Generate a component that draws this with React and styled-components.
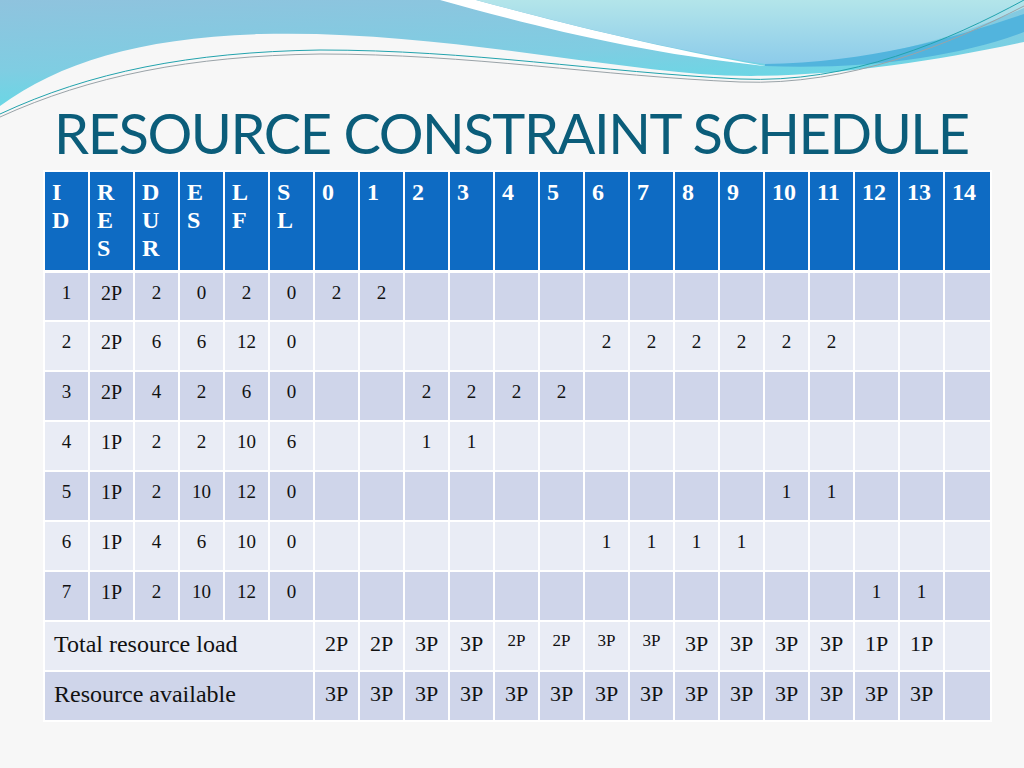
import React from "react";
import styled, { createGlobalStyle } from "styled-components";

const Global = createGlobalStyle`
  html, body { margin: 0; padding: 0; background: #f7f7f7; }
  * { box-sizing: border-box; }
`;

const Slide = styled.div`
  position: relative;
  width: 1024px;
  height: 768px;
  overflow: hidden;
  background: #f7f7f7;
  padding: 98px 0 0 43px;
`;

const Wave = styled.svg`
  position: absolute;
  left: 0;
  top: 0;
  z-index: 0;
`;

const Title = styled.h1`
  position: relative;
  z-index: 1;
  margin: 0 0 2px 11px;
  font-family: "Lato", "Open Sans", sans-serif;
  font-weight: 400;
  font-size: 56px;
  line-height: 70px;
  color: #0b5d7a;
  letter-spacing: -1.45px;
  white-space: nowrap;
`;

const Table = styled.table`
  position: relative;
  z-index: 1;
  border-collapse: collapse;
  table-layout: fixed;
  width: 947px;
  font-family: "Liberation Serif", "DejaVu Serif", serif;
  color: #111;
`;

const HeadCell = styled.th`
  height: 100px;
  padding: 6px 0 0 7px;
  vertical-align: top;
  text-align: left;
  background: #0e6bc3;
  color: #fff;
  font-weight: 700;
  font-size: 24px;
  line-height: 28px;
  border: 2px solid #fff;
  border-bottom-width: 3px;
`;

const Row = styled.tr`
  background: ${(p) => (p.$dark ? "#cfd5ea" : "#e9ecf5")};
`;

const Cell = styled.td`
  height: 50px;
  padding: ${(p) => (p.$raised ? "7px 0 0" : p.$big ? "10px 0 0" : "8px 0 0")};
  vertical-align: top;
  text-align: center;
  font-size: ${(p) => (p.$big ? "22px" : p.$unit ? "20px" : p.$raised ? "17px" : "19px")};
  line-height: 24px;
  border: 2px solid #fff;
  white-space: nowrap;
`;

const LabelCell = styled.td`
  height: 50px;
  padding: 9px 0 0 9px;
  vertical-align: top;
  text-align: left;
  font-size: 24px;
  line-height: 26px;
  border: 2px solid #fff;
  white-space: nowrap;
`;

const headLabels = ["I\nD", "R\nE\nS", "D\nU\nR", "E\nS", "L\nF", "S\nL"];
const days = Array.from({ length: 15 }, (_, i) => String(i));

const rows = [
  { base: ["1", "2P", "2", "0", "2", "0"], fill: { 0: "2", 1: "2" } },
  { base: ["2", "2P", "6", "6", "12", "0"], fill: { 6: "2", 7: "2", 8: "2", 9: "2", 10: "2", 11: "2" } },
  { base: ["3", "2P", "4", "2", "6", "0"], fill: { 2: "2", 3: "2", 4: "2", 5: "2" } },
  { base: ["4", "1P", "2", "2", "10", "6"], fill: { 2: "1", 3: "1" } },
  { base: ["5", "1P", "2", "10", "12", "0"], fill: { 10: "1", 11: "1" } },
  { base: ["6", "1P", "4", "6", "10", "0"], fill: { 6: "1", 7: "1", 8: "1", 9: "1" } },
  { base: ["7", "1P", "2", "10", "12", "0"], fill: { 12: "1", 13: "1" } },
];

const load = ["2P", "2P", "3P", "3P", "2P", "2P", "3P", "3P", "3P", "3P", "3P", "3P", "1P", "1P", ""];
const avail = ["3P", "3P", "3P", "3P", "3P", "3P", "3P", "3P", "3P", "3P", "3P", "3P", "3P", "3P", ""];

function WaveArt() {
  return (
    <Wave width="1024" height="130" viewBox="0 0 1024 130">
      <defs>
        <linearGradient id="gBase" x1="0" y1="0" x2="0.35" y2="1">
          <stop offset="0" stopColor="#8fc3de" />
          <stop offset="0.6" stopColor="#7fcde2" />
          <stop offset="1" stopColor="#63dae6" />
        </linearGradient>
        <linearGradient id="gTop" x1="0" y1="0" x2="0" y2="1">
          <stop offset="0" stopColor="#b3e5ea" />
          <stop offset="1" stopColor="#8ccbea" />
        </linearGradient>
      </defs>
      <path
        d="M0,106 C60,62 140,38 260,34 C420,30 560,62 700,74 C800,82 920,64 1024,42 V0 H0 Z"
        fill="url(#gBase)"
      />
      <path d="M440,0 C520,22 630,52 765,66 C650,46 550,20 476,0 Z" fill="#ffffff" />
      <path
        d="M476,0 C552,20 650,46 765,64 C860,66 950,40 1024,8 V0 Z"
        fill="url(#gTop)"
      />
      <path
        d="M765,64 C870,63 960,36 1024,14 V32 C960,56 870,70 765,66 Z"
        fill="#52b4dd"
      />
      <path
        d="M0,114 C90,72 190,52 320,50 C470,50 600,72 740,79 C850,84 950,40 1024,0"
        fill="none"
        stroke="#22a3ad"
        strokeWidth="1"
      />
      <path
        d="M0,117 C90,76 190,56 320,54 C470,54 600,76 740,82 C850,86 950,44 1024,6"
        fill="none"
        stroke="#9aa3a8"
        strokeWidth="1"
      />
    </Wave>
  );
}

export default function App() {
  return (
    <>
      <Global />
      <Slide>
        <WaveArt />
        <Title>RESOURCE CONSTRAINT SCHEDULE</Title>
        <Table>
          <colgroup>
            {Array.from({ length: 21 }, (_, i) => (
              <col key={i} style={{ width: i === 20 ? "47px" : "45px" }} />
            ))}
          </colgroup>
          <thead>
            <tr>
              {headLabels.map((h) => (
                <HeadCell key={h}>
                  {h.split("\n").map((c, i) => (
                    <div key={i}>{c}</div>
                  ))}
                </HeadCell>
              ))}
              {days.map((d) => (
                <HeadCell key={d}>{d}</HeadCell>
              ))}
            </tr>
          </thead>
          <tbody>
            {rows.map((r, ri) => (
              <Row key={ri} $dark={ri % 2 === 0}>
                {r.base.map((v, i) => (
                  <Cell key={i} $unit={v.includes("P")}>{v}</Cell>
                ))}
                {days.map((d, i) => (
                  <Cell key={d}>{r.fill[i] || ""}</Cell>
                ))}
              </Row>
            ))}
            <Row>
              <LabelCell colSpan={6}>Total resource load</LabelCell>
              {load.map((v, i) => (
                <Cell key={i} $big={!(i >= 4 && i <= 7)} $raised={i >= 4 && i <= 7}>
                  {v}
                </Cell>
              ))}
            </Row>
            <Row $dark>
              <LabelCell colSpan={6}>Resource available</LabelCell>
              {avail.map((v, i) => (
                <Cell key={i} $big>
                  {v}
                </Cell>
              ))}
            </Row>
          </tbody>
        </Table>
      </Slide>
    </>
  );
}
